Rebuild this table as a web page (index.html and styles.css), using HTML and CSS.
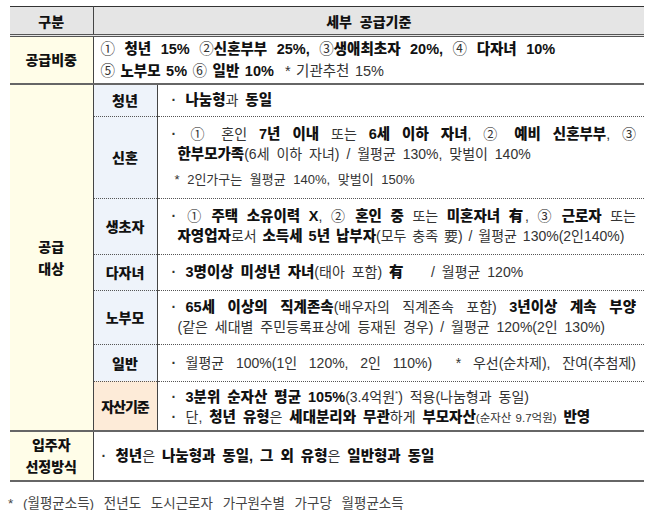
FILE: index.html
```html
<!DOCTYPE html>
<html lang="ko">
<head>
<meta charset="utf-8">
<link rel="stylesheet" href="styles.css">
</head>
<body>
<div class="page">
<table class="tbl">
  <colgroup><col class="c1"><col class="c2"><col class="c3"></colgroup>
  <tr class="head">
    <th>구분</th>
    <th colspan="2" class="hwide">세부 공급기준</th>
  </tr>
  <tr class="r-ratio main">
    <td class="lab1">공급비중</td>
    <td colspan="2" class="ratio">
      <div class="ln l1"><span class="n">①</span> <b>청년 15%</b> <span class="n">②</span><b>신혼부부 25%,</b> <span class="n">③</span><b>생애최초자 20%,</b> <span class="n">④</span> <b>다자녀 10%</b></div>
      <div class="ln l2"><span class="n">⑤</span> <b>노부모 5%</b> <span class="n">⑥</span> <b>일반 10%</b> &nbsp;<span class="n">* 기관추천 15%</span></div>
    </td>
  </tr>
  <tr class="r1 main">
    <td class="lab1" rowspan="7">공급<br>대상</td>
    <td class="lab2">청년</td>
    <td class="txt"><div class="ln"><span class="dot">·</span><b>나눔형</b>과 <b>동일</b></div></td>
  </tr>
  <tr class="r2 sub">
    <td class="lab2">신혼</td>
    <td class="txt">
      <div class="ln fill"><span class="dot">·</span>① 혼인 <b>7년 이내</b> 또는 <b>6세 이하 자녀</b>, ② <b>예비 신혼부부</b>, ③</div>
      <div class="ln cont"><b>한부모가족</b>(6세 이하 자녀) / 월평균 130%, 맞벌이 140%</div>
      <div class="note">* 2인가구는 월평균 140%, 맞벌이 150%</div>
    </td>
  </tr>
  <tr class="r3 sub">
    <td class="lab2">생초자</td>
    <td class="txt">
      <div class="ln fill"><span class="dot">·</span>① <b>주택 소유이력 X</b>, ② <b>혼인 중</b> 또는 <b>미혼자녀 有</b>, ③ <b>근로자</b> 또는</div>
      <div class="ln cont tight"><b>자영업자</b>로서 <b>소득세 5년 납부자</b>(모두 충족 要) / 월평균 130%(2인140%)</div>
    </td>
  </tr>
  <tr class="r4 sub">
    <td class="lab2">다자녀</td>
    <td class="txt"><div class="ln"><span class="dot">·</span><b>3명이상 미성년 자녀</b>(태아 포함) <b>有</b> &nbsp;&nbsp;&nbsp;/ 월평균 120%</div></td>
  </tr>
  <tr class="r5 sub">
    <td class="lab2">노부모</td>
    <td class="txt">
      <div class="ln fill"><span class="dot">·</span><b>65세 이상의 직계존속</b>(배우자의 직계존속 포함) <b>3년이상 계속 부양</b></div>
      <div class="ln cont">(같은 세대별 주민등록표상에 등재된 경우) / 월평균 120%(2인 130%)</div>
    </td>
  </tr>
  <tr class="r6 sub">
    <td class="lab2">일반</td>
    <td class="txt"><div class="ln fill"><span class="dot">·</span>월평균 100%(1인 120%, 2인 110%) &nbsp;* 우선(순차제), 잔여(추첨제)</div></td>
  </tr>
  <tr class="r7 sub">
    <td class="lab2 asset">자산기준</td>
    <td class="txt">
      <div class="ln"><span class="dot">·</span><b>3분위 순자산 평균 105%</b>(3.4억원<sup>*</sup>) 적용(나눔형과 동일)</div>
      <div class="ln"><span class="dot">·</span>단, <b>청년 유형</b>은 <b>세대분리와 무관</b>하게 <b>부모자산</b><small>(순자산 9.7억원)</small> <b>반영</b></div>
    </td>
  </tr>
  <tr class="r8 main last">
    <td class="lab1">입주자<br>선정방식</td>
    <td colspan="2" class="txt wide"><div class="ln"><span class="dot">·</span><b>청년</b>은 <b>나눔형과 동일, 그 외 유형</b>은 <b>일반형과 동일</b></div></td>
  </tr>
</table>
<p class="foot">* (월평균소득) 전년도 도시근로자 가구원수별 가구당 월평균소득</p>
</div>
</body>
</html>
```
FILE: styles.css
```css
html, body {
  margin: 0;
  padding: 0;
  background: #fff;
}
body {
  font-family: "Liberation Sans", "Noto Sans CJK KR", sans-serif;
  color: #222;
}
.page {
  padding: 6px 5px 0 10px;
}
.tbl {
  width: 634px;
  border-collapse: collapse;
  table-layout: fixed;
  font-size: 14px;
}
.c1 { width: 83px; }
.c2 { width: 64px; }
.tbl th, .tbl td {
  padding: 0;
  vertical-align: middle;
}
.tbl .head th {
  background: #e5e5e5;
  height: 27px;
  font-size: 14px;
  font-weight: 900;
  color: #111;
  border-top: 1.5px solid #333;
  border-bottom: 3px double #555;
}
.tbl .head th:first-child { border-right: 1px solid #444; }
.tbl .hwide { word-spacing: 4px; font-size: 14.5px; }
b { font-weight: 900; color: #111; }
.tbl .lab1 {
  background: #fffde8;
  text-align: center;
  font-weight: 900;
  color: #111;
  border-right: 1px solid #444;
  line-height: 22px;
}
.tbl .lab2 {
  background: #eef3fa;
  text-align: center;
  font-weight: 900;
  color: #111;
  border-right: 1px solid #444;
}
.tbl .lab2.asset {
  background: #fdebd8;
  letter-spacing: -1px;
}
.main td { border-top: 2px solid #666; }
.sub td:not(.lab1) { border-top: 1px dotted #555; }
.last td { border-bottom: 2px solid #666; }
.r-ratio { height: 47px; }
.r1 { height: 32px; }
.r2 { height: 82px; }
.r3 { height: 56px; }
.r4 { height: 36px; }
.r5 { height: 54px; }
.r6 { height: 37px; }
.r7 { height: 50px; }
.r8 { height: 50px; }
.tbl .ratio {
  padding: 1px 0 1px 7px;
  line-height: 22px;
  font-size: 14.5px;
}
.ratio .l1 { word-spacing: 5.5px; }
.ratio .l2 { word-spacing: 1.5px; }
.n { font-weight: 400; color: #333; }
.tbl .txt {
  padding: 0 8px 0 14px;
  line-height: 20px;
  color: #333;
  word-spacing: 3px;
}
.txt b { font-size: 14.5px; }
.tbl .txt.wide { padding-left: 8px; }
.dot {
  display: inline-block;
  width: 14px;
  word-spacing: 0;
  font-weight: 700;
}
.ln { white-space: nowrap; }
.fill {
  text-align: justify;
  text-align-last: justify;
  white-space: normal;
}
.cont { padding-left: 6px; }
.tight { word-spacing: 2px; }
.note {
  font-size: 13px;
  padding-left: 3px;
  margin-top: 6px;
  line-height: 20px;
  word-spacing: 4px;
}
sup { font-size: 8px; }
small { font-size: 11.5px; word-spacing: 1px; }
.foot {
  margin: 10px 0 0 -2px;
  font-size: 13.5px;
  color: #444;
  word-spacing: 6px;
}
```
